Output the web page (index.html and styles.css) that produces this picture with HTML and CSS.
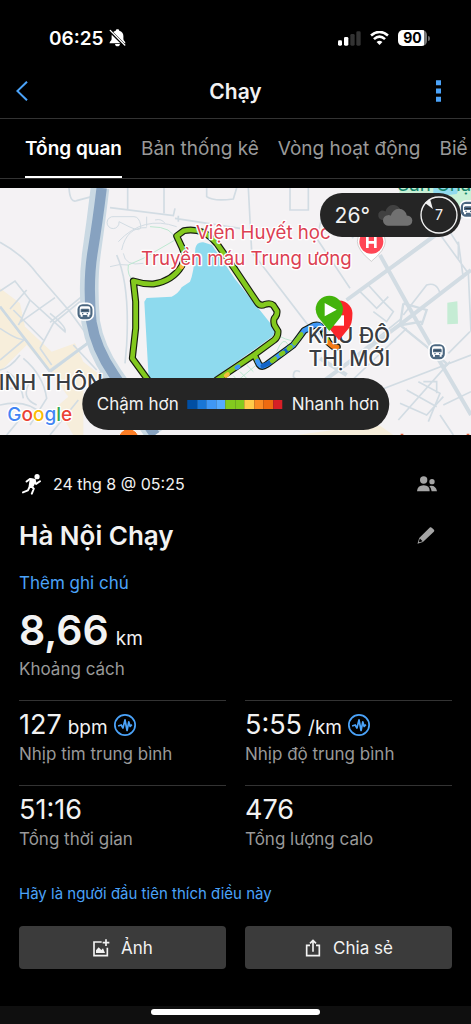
FILE: index.html
```html
<!DOCTYPE html>
<html lang="vi">
<head>
<meta charset="utf-8">
<meta name="viewport" content="width=device-width, initial-scale=1">
<title>Chạy</title>
<link rel="stylesheet" href="styles.css">
</head>
<body>
<div class="app">
  <div class="status">
    <div class="status-side">
      <span class="clock">06:25</span>
      <svg class="bell" viewBox="0 0 48 52" aria-hidden="true">
        <path d="M24 1c-4 0-5 2-5 4-8 2-12 8-12 15v9c0 5-6 7-6 12h46c0-5-6-7-6-12v-9c0-7-4-13-12-15 0-2-1-4-5-4zM17 43h14c0 4-3 7-7 7s-7-3-7-7z" fill="#fff"/>
        <path d="M2 5l42 42" stroke="#000" stroke-width="9"/>
        <path d="M3 4l42 42" stroke="#fff" stroke-width="4" stroke-linecap="round"/>
      </svg>
    </div>
    <div class="status-side status-right">
      <svg class="signal" viewBox="0 0 69 45" aria-hidden="true">
        <rect y="28" width="12" height="16" rx="4" fill="#fff"/><rect x="18" y="18" width="13" height="26" rx="4" fill="#fff"/>
        <rect x="37" y="9" width="13" height="35" rx="4" fill="#333"/><rect x="55" y="1" width="13" height="43" rx="4" fill="#333"/>
      </svg>
      <svg class="wifi" viewBox="0 0 58 43" aria-hidden="true">
        <path d="M3 14Q29-8 55 14" fill="none" stroke="#fff" stroke-width="8"/>
        <path d="M12 25Q29 9 46 25" fill="none" stroke="#fff" stroke-width="8"/>
        <path d="M20 34Q29 26 38 34L29 43Z" fill="#fff"/>
      </svg>
      <div class="battery"><span class="battery-level">90</span></div>
    </div>
  </div>

  <header class="nav">
    <button class="nav-btn" aria-label="Quay lại"><svg class="back" viewBox="0 0 36 60" aria-hidden="true"><path d="M33 2L4 30l29 28" fill="none" stroke="#4ba3f9" stroke-width="6"/></svg></button>
    <h1 class="nav-title">Chạy</h1>
    <button class="nav-btn nav-more" aria-label="Thêm"><svg class="more" viewBox="0 0 15 65" aria-hidden="true"><path d="M0 0h15v15H0zM0 25h15v15H0zM0 50h15v15H0z" fill="#4ba3f9"/></svg></button>
  </header>

  <nav class="tabs">
    <a href="#overview" class="tab tab-on">Tổng quan</a>
    <a href="#stats" class="tab">Bản thống kê</a>
    <a href="#laps" class="tab">Vòng hoạt động</a>
    <a href="#charts" class="tab">Biể</a>
  </nav>

  <section class="map">
    <svg class="map-art" viewBox="0 9 1413 741" preserveAspectRatio="xMidYMid slice" role="img" aria-label="Bản đồ">
      <rect y="9" width="1413" height="741" fill="#f4f2f4"/>
      <g fill="#f7eedb">
        <path d="M0 310L60 355 75 425 155 500 225 475 250 530 300 570 250 610V750H220L170 665 205 635 150 560 80 480 0 560Z"/>
        <path d="M890 750L1000 735 1140 722 1180 750Z"/>
      </g>
      <path d="M1200 9h213v90l-80-30-50-10-90-5z" fill="#c9f1d6"/>
      <path d="M1300 9h80l-10 18-70 8z" fill="#90daee"/>
      <path d="M1342 353l30-4 2 67-32 2z" fill="#c5ecd4"/>

      <g fill="none" stroke="#d2dce3" stroke-width="5">
        <path d="M0 172Q70 210 110 265L210 380 290 490M30 372L80 315M0 318L45 288 90 345 60 412 165 338M60 412l-5 8M90 345L195 440Q200 425 150 385M0 365L150 560M0 525L75 462M150 555L270 468M120 490L160 415 240 350M120 490L155 540M150 412L245 335M0 430Q60 470 75 462M40 375l90 90M220 480L290 555M150 750L235 645M0 555Q30 550 60 510M70 520Q130 570 140 640L90 720M20 560Q60 580 70 640M90 590Q60 640 110 660M0 610H60M0 660Q80 640 130 690M20 750L70 690"/>
        <path d="M207 9Q210 55 230 47L275 35M383 9V72M492 9V85M330 68L520 92 525 70M620 9V35Q640 50 700 42L710 9M535 92V110M525 100L720 130M350 210Q390 300 380 480L375 535"/>
        <path d="M357 110a18 18 0 1 1-15-15l60 0q15 0 20 25t-35 5zM355 170Q430 90 530 125M365 195Q380 125 440 128M440 95v30M465 105q20-5 30 10M370 205q5 40 60 30M330 245Q360 235 385 240" stroke-width="3"/>
        <path d="M745 9L755 200 920 415 985 470M870 9V75H925V9M970 80L950 160 1050 310M960 110Q1030 120 1060 160M1040 345L1413 65M1080 320L1130 370 1165 335M1105 300L1150 350 1180 380 1160 410 1120 380M1210 390L1280 300Q1310 290 1320 325M1140 615L1413 510M970 590L1205 400M1010 630L1220 430M900 560Q880 550 880 575L930 625M1195 705L1350 530M1255 590L1320 625 1285 710M1200 655L1280 690 1330 635M1220 615L1310 665M1270 590h40v35M1320 690L1360 750M1330 660L1413 620M1410 440L1345 505M1325 155L1405 265 1413 440M1375 170L1390 280M1330 110L1375 180V225"/>
      </g>
      <g fill="none" stroke="#d2dce3" stroke-width="12">
        <path d="M1140 210L1240 390 1320 530 1413 690M900 640L1205 415 1413 255M1040 345L1390 90M960 520L1040 570"/>
        <path d="M1210 355L1200 420 1280 485 1345 540M1210 355L1280 375 1265 420M1205 420L1265 410" stroke-width="7"/>
      </g>
      <path d="M0 365L150 560M150 560L270 470M300 560L380 750" fill="none" stroke="#ccd9e2" stroke-width="8"/>
      <path d="M300 9Q288 110 275 200T272 410Q285 490 340 570T465 750" fill="none" stroke="#cad9e3" stroke-width="56"/>
      <path d="M305 9Q293 110 278 200T274 410Q287 490 342 570T465 750" fill="none" stroke="#87a2c0" stroke-width="31"/>
      <g fill="none" stroke="#bde8d1" stroke-width="3">
        <path d="M450 125Q520 125 525 165L430 220 385 240Q380 270 402 290M705 550l45-45M715 585l60-50M700 572l30 35M720 560l24 24M740 540l20 20M830 450q60 30 65 10M830 500q20-50 35-20"/>
      </g>

      <path d="M440 339L515 335Q535 326 545 307L570 290Q583 260 586 190 590 170 610 172L636 180 705 282 823 430Q830 445 810 460L640 580H446L433 350Z" fill="#8edaee"/>

      <g fill="none" stroke-linejoin="round" stroke-linecap="round">
        <path d="M455 600L397 520 407 430V350L400 288Q430 298 460 297 518 288 545 243 560 215 545 185L530 153 552 137Q580 131 610 142 630 152 650 175L705 253 770 350Q780 366 795 358 812 353 820 361L831 378Q832 388 827 395 818 402 823 420L834 438Q835 455 823 465L763 509 650 585" stroke="#161d10" stroke-width="21"/>
        <path d="M763 509L777 538Q785 549 800 539L880 480 895 460 912 437 942 421Q962 416 970 440L985 472 1000 485 1012 486" stroke="#161d10" stroke-width="21"/>
        <path d="M455 600L397 520 407 430V350L400 288Q430 298 460 297 518 288 545 243 560 215 545 185L530 153 552 137Q580 131 610 142 630 152 650 175L705 253 770 350Q780 366 795 358 812 353 820 361L831 378Q832 388 827 395 818 402 823 420L834 438Q835 455 823 465L763 509 650 585M763 509L772 528" stroke="#83c91e" stroke-width="14"/>
        <path d="M772 528L777 538Q785 549 800 539L880 480 895 460 912 437 942 421Q962 416 966 430" stroke="#3f97f5" stroke-width="14"/>
        <path d="M788 543L808 534M850 503L858 497" stroke="#1264c8" stroke-width="13"/>
        <path d="M816 528L825 521M843 508L850 503M866 491L872 486M883 475L895 460 904 448M972 445L985 470" stroke="#83c91e" stroke-width="13"/>
        <path d="M984 472L1000 485 1012 486" stroke="#f47c18" stroke-width="14"/>
        <path d="M549 232L545 246M678 572L683 568" stroke="#f4bd3c" stroke-width="13"/>
        <path d="M710 548L715 545" stroke="#3f97f5" stroke-width="13"/>
      </g>

      <g class="place-red">
        <text x="588" y="163">Viện Huyết học</text>
        <text x="423" y="239">Truyền máu Trung ương</text>
      </g>
      <g class="place-dark">
        <text x="1047" y="474" text-anchor="middle">KHU ĐÔ</text>
        <text x="1048" y="544" text-anchor="middle">THỊ MỚI</text>
        <text x="309" y="616" text-anchor="end">INH THÔN</text>
      </g>
      <text class="place-green" x="1192" y="17">Sân Chạy</text>
      <text class="google" x="22" y="709"><tspan fill="#4285f4">G</tspan><tspan fill="#ea4335">o</tspan><tspan fill="#fbbc05">o</tspan><tspan fill="#4285f4">g</tspan><tspan fill="#34a853">l</tspan><tspan fill="#ea4335">e</tspan></text>

      <path d="M1114 229Q1072 195 1072 169a41 41 0 1 1 84 0Q1156 195 1114 229Z" fill="#fff" stroke="#bbb" stroke-width="2"/>
      <circle cx="1114" cy="170" r="36" fill="#ff4655"/>
      <path d="M1102 155v34M1126 155v34M1102 172h24" stroke="#fff" stroke-width="8"/>
      <circle cx="386" cy="762" r="31" fill="#fc7e26" stroke="#fff" stroke-width="3"/>
      <path d="M1202 748h8M1400 748h8" stroke="#e26540" stroke-width="4"/>

      <g id="stop">
        <rect x="230" y="355" width="50" height="50" rx="18" fill="#4b6780" stroke="#fff" stroke-width="5"/>
        <path d="M245 364h20q6 0 6 7v18h-3v6h-6v-5h-14v5h-6v-6h-3v-18q0-7 6-7z" fill="#fff"/>
        <path d="M244 373h22M244 380h22v-5h-22z" stroke="#4b6780" stroke-width="4"/>
        <path d="M246 386h4M260 386h4" stroke="#4b6780" stroke-width="4"/>
      </g>
      <use href="#stop" x="1057" y="120"/>
      <use href="#stop" x="1150" y="-307"/>

      <path d="M1017 466L984 426Q975 409 978 393A40 40 0 1 1 1057 393Q1057 414 1047 429Z" fill="#fb252b"/>
      <rect x="1001" y="391" width="31" height="31" fill="#fff"/>
      <path d="M988 438L954 396Q947 383 947 373A41 41 0 0 1 1029 373Q1029 384 1022 396Z" fill="#43b30b"/>
      <path d="M974 354L1010 374 974 394Z" fill="#fff"/>
    </svg>

    <div class="weather">
      <span class="temp">26°</span>
      <svg class="clouds" viewBox="0 0 110 64" aria-hidden="true">
        <path d="M15 46A15 15 0 0 1 15 17Q22 17 26 20A24 24 0 0 1 73 18L55 46Z" fill="#414141"/>
        <path d="M36 63a16 16 0 0 1-3-32q5-1 9 2 6-21 25-22 20 1 24 21 16 2 17 15-1 15-15 16z" fill="#717171"/>
      </svg>
      <svg class="wind" viewBox="0 0 112 112" aria-label="Gió 7">
        <circle cx="56" cy="56" r="53" fill="none" stroke="#f2f2f2" stroke-width="4"/>
        <path d="M14 20L38 38 30 10Z" fill="#f2f2f2"/>
        <text x="56" y="71" text-anchor="middle">7</text>
      </svg>
    </div>

    <div class="pace">
      <span>Chậm hơn</span>
      <span class="scale"><i class="c1"></i><i class="c2"></i><i class="c3"></i><i class="c4"></i><i class="c5"></i><i class="c5"></i><i class="c6"></i><i class="c7"></i><i class="c8"></i><i class="c9"></i></span>
      <span>Nhanh hơn</span>
    </div>
  </section>

  <main class="details" id="overview">
    <div class="row meta">
      <svg class="runner" viewBox="0 0 58 64" aria-hidden="true">
        <circle cx="46" cy="8" r="8" fill="#fff"/>
        <path d="M14 23L24 15 38 18 27 36 36 45 30 60M25 36L18 50 3 56M36 20L43 30 55 22" fill="none" stroke="#fff" stroke-width="6" stroke-linejoin="round" stroke-linecap="round"/>
        <path d="M24 13L41 15 43 22 35 39 20 38Z" fill="#fff"/>
      </svg>
      <span class="date">24 thg 8 @ 05:25</span>
      <button class="icon-btn" aria-label="Quyền riêng tư"><svg class="people" viewBox="0 0 60 48" aria-hidden="true">
        <g fill="#a5a5a5"><circle cx="20" cy="12" r="11"/><circle cx="45" cy="17" r="8"/><path d="M0 46Q1 28 20 28T38 46ZM37 30Q56 26 60 46H44Q43 36 37 30Z"/></g></svg></button>
    </div>
    <div class="row title-row">
      <h2 class="title">Hà Nội Chạy</h2>
      <button class="icon-btn" aria-label="Sửa tên"><svg class="pencil" viewBox="0 0 52 50" aria-hidden="true">
        <path d="M1 49L6 32 38 1Q41 0 43 2L50 9Q51 12 49 14L17 44Z" fill="#a5a5a5"/><path d="M8 34l8 8-9 3-2-2z" fill="#000"/></svg></button>
    </div>
    <a class="link" href="#note">Thêm ghi chú</a>
    <div class="distance"><p class="big">8,66 <span class="unit">km</span></p><p class="label">Khoảng cách</p></div>

    <div class="grid">
      <div class="cell"><p class="value">127 <span class="unit">bpm</span> <svg class="pulse" viewBox="0 0 64 64" aria-hidden="true"><circle cx="32" cy="32" r="29.500"/><path d="M12 35L21 32 26 41 32 17 38 48 43 23 47 36 52 31"/></svg></p><p class="label">Nhịp tim trung bình</p></div>
      <div class="cell"><p class="value">5:55 <span class="unit">/km</span> <svg class="pulse" viewBox="0 0 64 64" aria-hidden="true"><circle cx="32" cy="32" r="29.500"/><path d="M12 35L21 32 26 41 32 17 38 48 43 23 47 36 52 31"/></svg></p><p class="label">Nhịp độ trung bình</p></div>
      <div class="cell"><p class="value">51:16</p><p class="label">Tổng thời gian</p></div>
      <div class="cell"><p class="value">476</p><p class="label">Tổng lượng calo</p></div>
    </div>

    <a class="like" href="#like">Hãy là người đầu tiên thích điều này</a>
    <div class="actions">
      <button class="action"><svg class="act-icon" viewBox="0 0 54 54" aria-hidden="true"><path d="M29 9H6v41h40V26" fill="none" stroke="#f2f2f2" stroke-width="5"/><path d="M42 1v20M32 11h20" stroke="#f2f2f2" stroke-width="5"/><path d="M12 42V34l8-9 8 8 5-5 6 14z" fill="#f2f2f2"/></svg>Ảnh</button>
      <button class="action"><svg class="act-icon" viewBox="0 0 54 54" aria-hidden="true"><path d="M18 19H8v31h38V19H36M27 38V5M18 13l9-9 9 9" fill="none" stroke="#f2f2f2" stroke-width="5"/></svg>Chia sẻ</button>
    </div>
  </main>
  <footer class="home"><span class="home-bar"></span></footer>
</div>
</body>
</html>
```
FILE: styles.css
```css
* { box-sizing: border-box; }
body, h1, h2, p { margin: 0; }
body {
  background: #000;
  color: #f2f2f2;
  font-family: Inter, "Noto Sans", sans-serif;
  font-size: 16px;
}
.app { min-height: 100vh; display: flex; flex-direction: column; overflow: hidden; }
button { background: none; border: 0; padding: 0; color: inherit; font: inherit; }
a { text-decoration: none; }
svg { display: block; flex: none; }
p { white-space: nowrap; }

.status { display: flex; justify-content: space-between; align-items: center; height: 64px; padding: 12px 41px 0 49px; color: #fff; }
.status-side { display: flex; align-items: center; gap: 5px; }
.status-right { gap: 9px; }
.clock { font-size: 19px; font-weight: 600; }
.bell { width: 17px; height: 18px; }
.signal { width: 23px; height: 15px; }
.wifi { width: 19px; height: 14px; }
.battery { display: flex; align-items: center; gap: 1px; }
.battery::after { content: ""; width: 2px; height: 5px; border-radius: 0 2px 2px 0; background: #666; }
.battery-level { width: 29px; line-height: 16px; border-radius: 5px; background: linear-gradient(90deg, #fff 90%, #777 90%); color: #000; font-size: 14px; font-weight: 700; text-align: center; }

.nav { display: flex; justify-content: space-between; align-items: center; height: 55px; padding: 0 16px; border-bottom: 1px solid #333; }
.nav-btn { width: 28px; height: 32px; display: flex; align-items: center; }
.nav-more { justify-content: flex-end; padding-right: 14px; }
.back { width: 12px; height: 20px; }
.more { width: 5px; height: 22px; }
.nav-title { font-size: 21px; font-weight: 600; }

.tabs { display: flex; gap: 19px; height: 60px; padding-left: 25px; border-bottom: 1px solid #333; margin-bottom: 9px; white-space: nowrap; }
.tab { font-size: 19px; line-height: 59px; color: #999; border-bottom: 2px solid transparent; }
.tab-on { color: #fff; font-weight: 600; border-color: #fff; }

.map { position: relative; overflow: hidden; }
.map-art { width: 100%; height: 247px; }
.map-art text { font-family: Inter, "Noto Sans", sans-serif; paint-order: stroke; stroke: #fff; stroke-width: 8px; stroke-linejoin: round; }
.place-red { fill: #dc4052; font-size: 56px; }
.place-dark { fill: #3a3d42; font-size: 63px; font-weight: 500; }
.map-art .place-green { fill: #17856a; font-size: 56px; stroke: none; }
.map-art .google { font-size: 57px; font-weight: 500; }

.weather { position: absolute; top: 5px; right: 10px; display: flex; align-items: center; gap: 7px; height: 44px; padding: 0 3px 0 15px; border-radius: 22px; background: #252525; }
.temp { font-size: 21px; }
.clouds { width: 36px; height: 21px; }
.wind { width: 38px; height: 38px; }
.wind text { fill: #f2f2f2; font-size: 42px; }

.pace { position: absolute; bottom: 5px; left: 50%; transform: translateX(-50%); display: flex; align-items: center; gap: 9px; height: 52px; padding: 0 10px 0 15px; border-radius: 26px; background: #252525; font-size: 17px; white-space: nowrap; }
.scale { display: grid; grid-template-columns: repeat(10, 1fr); width: 95px; height: 9px; }
.c1 { background: #004ea3; }
.c2 { background: #1976d6; }
.c3 { background: #3f97f5; }
.c4 { background: #55aaff; }
.c5 { background: #83c91e; }
.c6 { background: #ffcb4a; }
.c7 { background: #fb8c24; }
.c8 { background: #ee6a10; }
.c9 { background: #d61f26; }

.details { display: flex; flex-direction: column; padding: 37px 19px; }
.row { display: flex; align-items: center; }
.icon-btn { margin-left: auto; width: 20px; margin-right: 15px; }
.meta { height: 24px; gap: 12px; padding-left: 3px; }
.runner { width: 19px; height: 21px; }
.date { font-size: 16px; }
.people { width: 20px; height: 16px; }
.title-row { height: 36px; margin-top: 21px; }
.title { font-size: 26px; font-weight: 600; }
.pencil { width: 18px; height: 17px; }
.link { margin-top: 18px; font-size: 17px; line-height: 24px; color: #4ba3f9; }
.distance { padding-bottom: 19px; }
.big { display: flex; align-items: baseline; gap: 7px; height: 46px; margin-top: 16px; font-size: 41px; line-height: 38px; font-weight: 600; }
.unit { font-size: 19px; font-weight: 400; }
.label { font-size: 17px; line-height: 24px; color: #999; }
.grid { display: grid; grid-template-columns: 1fr 1fr; column-gap: 19px; }
.cell { height: 85px; padding-top: 6px; border-top: 1px solid #333; }
.value { display: flex; align-items: baseline; gap: 6px; height: 35px; font-size: 27px; line-height: 35px; }
.pulse { width: 22px; height: 22px; align-self: center; fill: none; stroke: #4ba3f9; stroke-width: 5px; stroke-linejoin: round; }
.like { margin-top: 12px; font-size: 15px; line-height: 24px; color: #4ba3f9; }
.actions { display: grid; grid-template-columns: 1fr 1fr; gap: 19px; margin-top: 20px; }
.action { display: flex; align-items: center; justify-content: center; gap: 11px; height: 43px; border-radius: 4px; background: #3b3b3b; font-size: 17px; }
.act-icon { width: 18px; height: 18px; }

.home { margin-top: auto; height: 18px; padding-top: 3px; background: #0f0f0f; }
.home-bar { display: block; width: 36%; height: 6px; margin: 0 auto; border-radius: 3px; background: #fff; }
```
